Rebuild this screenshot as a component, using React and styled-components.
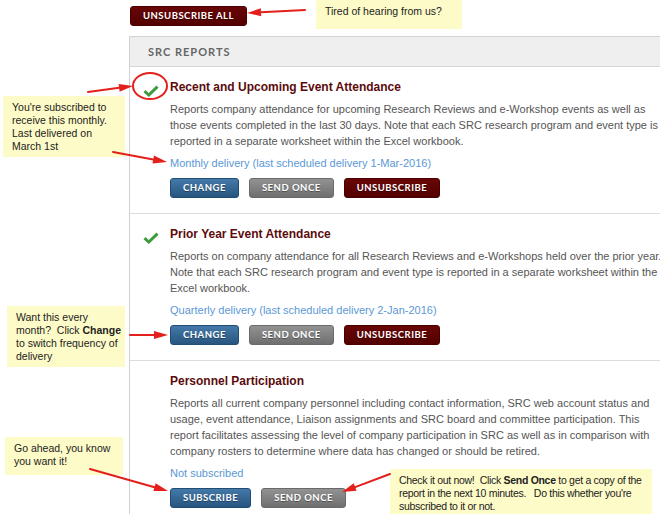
import React from 'react'
import styled, { createGlobalStyle, css } from 'styled-components'

const Global = createGlobalStyle`
  html, body {
    margin: 0;
    padding: 0;
    overflow: hidden;
    background: #fff;
  }
  body {
    font-family: "Liberation Sans", Arial, sans-serif;
  }
`

const reports = [
  {
    title: 'Recent and Upcoming Event Attendance',
    subscribed: true,
    text: 'Reports company attendance for upcoming Research Reviews and e-Workshop events as well as those events completed in the last 30 days. Note that each SRC research program and event type is reported in a separate worksheet within the Excel workbook.',
    status: 'Monthly delivery (last scheduled delivery 1-Mar-2016)',
  },
  {
    title: 'Prior Year Event Attendance',
    subscribed: true,
    text: 'Reports on company attendance for all Research Reviews and e-Workshops held over the prior year. Note that each SRC research program and event type is reported in a separate worksheet within the Excel workbook.',
    status: 'Quarterly delivery (last scheduled delivery 2-Jan-2016)',
  },
  {
    title: 'Personnel Participation',
    subscribed: false,
    text: 'Reports all current company personnel including contact information, SRC web account status and usage, event attendance, Liaison assignments and SRC board and committee participation. This report facilitates assessing the level of company participation in SRC as well as in comparison with company rosters to determine where data has changed or should be retired.',
    status: 'Not subscribed',
  },
]

const notes = [
  { left: 316, top: 0, width: 146, height: 29, lines: ['Tired of hearing from us?'] },
  {
    left: 3, top: 96, width: 122, height: 61,
    lines: ["You're subscribed to", 'receive this monthly.', 'Last delivered on', 'March 1st'],
  },
  {
    left: 7, top: 306, width: 118, height: 61,
    lines: ['Want this every', <>month?  Click <b>Change</b></>, 'to switch frequency of', 'delivery'],
  },
  { left: 5, top: 437, width: 118, height: 38, lines: ['Go ahead, you know', 'you want it!'] },
  {
    left: 390, top: 469, width: 262, height: 50, tight: true,
    lines: [
      <>Check it out now!  Click <b>Send Once</b> to get a copy of the</>,
      "report in the next 10 minutes.   Do this whether you're",
      'subscribed to it or not.',
    ],
  },
]

const arrows = [
  [305, 10, 247, 13],
  [88, 92, 133, 86],
  [113, 152, 167, 162],
  [130, 335, 168, 335],
  [90, 469, 168, 491],
  [390, 474, 342, 492],
]

function Arrow({ x1, y1, x2, y2 }) {
  const dx = x2 - x1
  const dy = y2 - y1
  const len = Math.hypot(dx, dy)
  const ux = dx / len
  const uy = dy / len
  const head = 14
  const half = 4
  const bx = x2 - ux * head
  const by = y2 - uy * head
  const pts = `${x2},${y2} ${bx - uy * half},${by + ux * half} ${bx + uy * half},${by - ux * half}`
  return (
    <g>
      <line x1={x1} y1={y1} x2={bx} y2={by} stroke="#e3201c" strokeWidth="2" strokeLinecap="round" />
      <polygon points={pts} fill="#e3201c" />
    </g>
  )
}

function Check() {
  return (
    <svg width="16" height="12" viewBox="0 0 16 12">
      <path d="M1.5 6.2 L5.8 10 L14.5 1.6" fill="none" stroke="#3e9a3e" strokeWidth="3" strokeLinejoin="miter" />
    </svg>
  )
}

export default function App() {
  return (
    <Page>
      <Global />
      <TopBar>
        <Button $kind="maroon">Unsubscribe All</Button>
      </TopBar>

      <Panel>
        <PanelHeader>SRC Reports</PanelHeader>
        {reports.map((r) => (
          <Report key={r.title}>
            <IconCell>{r.subscribed && <Check />}</IconCell>
            <Body>
              <Title>{r.title}</Title>
              <Description>{r.text}</Description>
              <Status>{r.status}</Status>
              <Actions>
                {r.subscribed ? (
                  <Button $kind="blue">Change</Button>
                ) : (
                  <Button $kind="blue">Subscribe</Button>
                )}
                <Button $kind="gray">Send Once</Button>
                {r.subscribed && <Button $kind="maroon">Unsubscribe</Button>}
              </Actions>
            </Body>
          </Report>
        ))}
      </Panel>

      {notes.map((n, i) => (
        <Note
          key={i}
          $tight={n.tight}
          style={{ left: n.left, top: n.top, width: n.width, height: n.height }}
        >
          {n.lines.map((l, j) => (
            <NoteLine key={j}>{l}</NoteLine>
          ))}
        </Note>
      ))}

      <Overlay width="660" height="514" viewBox="0 0 660 514">
        <ellipse cx="150" cy="86" rx="17" ry="13" fill="none" stroke="#e3201c" strokeWidth="2" />
        {arrows.map(([x1, y1, x2, y2], i) => (
          <Arrow key={i} x1={x1} y1={y1} x2={x2} y2={y2} />
        ))}
      </Overlay>
    </Page>
  )
}

const Page = styled.div`
 position: relative;
 width: 660px;
 height: 514px;
 overflow: hidden;
 padding: 6px 0 0 129px;
 box-sizing: border-box;
`

const TopBar = styled.div`
 display: flex;
 height: 20px;
 padding-left: 1px;
`

const kinds = {
  blue: css`
    background: linear-gradient(#4479a9, #27557f);
    border-color: #214c73;
  `,
  gray: css`
    background: linear-gradient(#929292, #6f6f6f);
    border-color: #6a6a6a;
  `,
  maroon: css`
    background: linear-gradient(#680606, #530000);
    border-color: #4a0000;
  `,
}

const Button = styled.button`
 height: 20px;
 padding: 0 12px;
 border: 1px solid;
 border-radius: 3px;
 color: #fff;
 font-family: Lato, "Liberation Sans", sans-serif;
 font-weight: 700;
 font-size: 9.5px;
 letter-spacing: 0.5px;
 text-transform: uppercase;
 line-height: 18px;
 text-shadow: 0 1px 0 rgba(0, 0, 0, 0.35);
 cursor: pointer;
 ${(p) => kinds[p.$kind]}
`

const Panel = styled.div`
 margin-top: 10px;
 width: 540px;
 border-left: 1px solid #d2d2d2;
 border-top: 1px solid #d2d2d2;
`

const PanelHeader = styled.div`
 height: 29px;
 padding-left: 18px;
 background: #efefef;
 border-bottom: 1px solid #d6d6d6;
 color: #666;
 font-family: Lato, "Liberation Sans", sans-serif;
 font-weight: 700;
 font-size: 11px;
 letter-spacing: 1px;
 text-transform: uppercase;
 line-height: 29px;
`

const Report = styled.div`
 display: grid;
 grid-template-columns: 40px 1fr;
 padding: 12px 7px 15px 0;
 border-bottom: 1px solid #dcdcdc;
`

const IconCell = styled.div`
 padding: 4px 0 0 13px;
`

const Body = styled.div`
 display: flex;
 flex-direction: column;
`

const Title = styled.div`
 color: #5b0b0b;
 font-weight: 700;
 font-size: 12px;
 line-height: 16px;
 margin-bottom: 6px;
`

const Description = styled.div`
 color: #555;
 font-size: 11px;
 line-height: 16px;
`

const Status = styled.div`
 color: #5a98d6;
 font-size: 11px;
 line-height: 16px;
 margin-top: 6px;
`

const Actions = styled.div`
 display: flex;
 gap: 10px;
 margin-top: 7px;
`

const Note = styled.div`
 position: absolute;
 box-sizing: border-box;
 padding: 5px 9px;
 background: #fdfbc8;
 color: #222;
 font-family: "Liberation Sans", Arial, sans-serif;
 font-size: 10.5px;
 line-height: 13px;
 letter-spacing: ${(p) => (p.$tight ? '-0.3px' : '0')};
`

const NoteLine = styled.div`
 white-space: pre;
`

const Overlay = styled.svg`
 position: absolute;
 left: 0;
 top: 0;
 pointer-events: none;
`
